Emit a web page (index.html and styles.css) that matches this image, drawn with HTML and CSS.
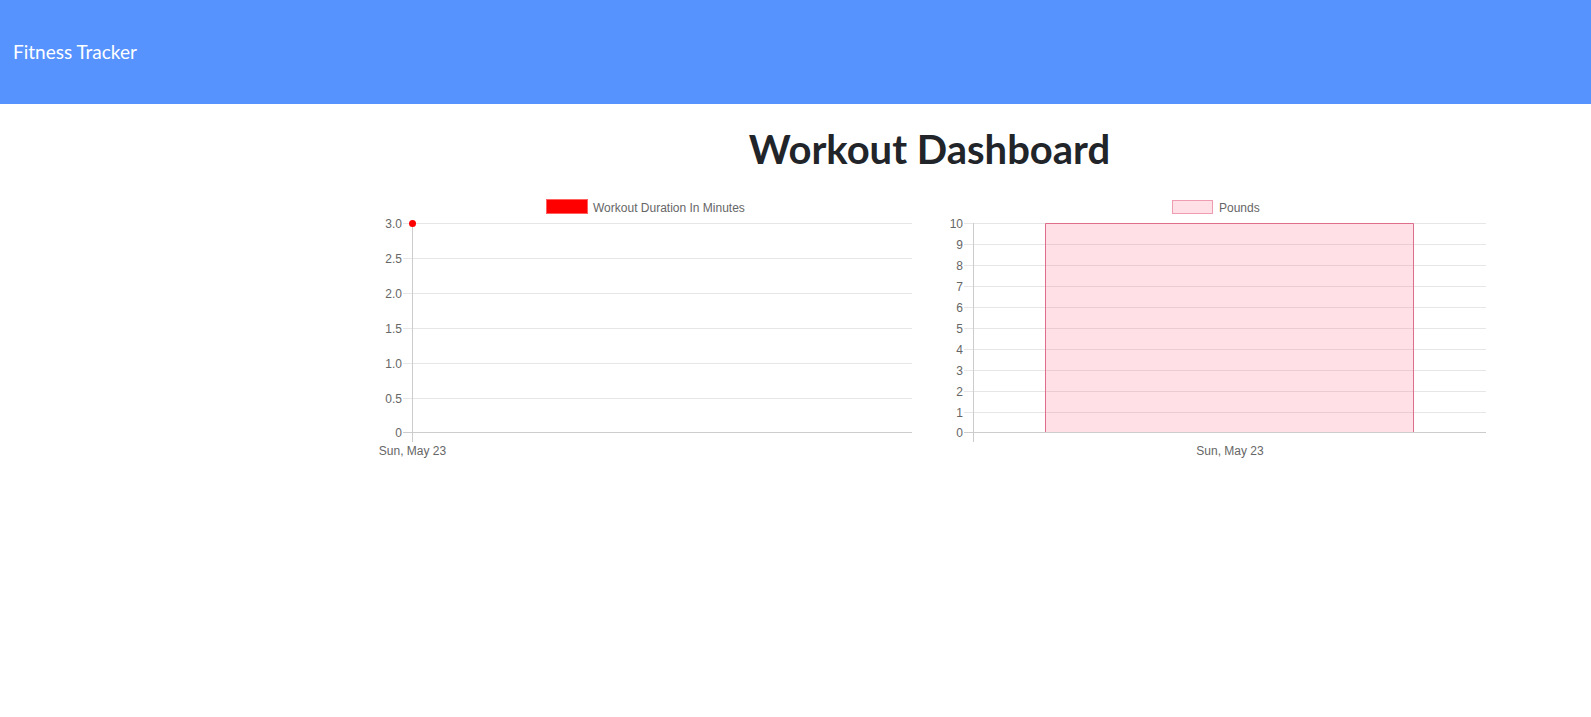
FILE: index.html
```html
<!DOCTYPE html>
<html lang="en">
<head>
<meta charset="utf-8">
<title>Fitness Tracker</title>
<link rel="stylesheet" href="styles.css">
</head>
<body>
<nav class="navbar">
  <span class="brand">Fitness Tracker</span>
</nav>
<main class="dashboard">
  <h1 class="title">Workout Dashboard</h1>
  <div class="charts">
    <div class="chart">
      <svg width="556" height="275" viewBox="0 0 556 275" class="chart-svg">
        <rect x="173.5" y="10.5" width="41" height="14" fill="#ff0000" stroke="#ff6060"/>
        <text x="220" y="23" class="lbl">Workout Duration In Minutes</text>
        <g stroke="#e6e6e6" stroke-width="1">
          <line x1="30" y1="34.5" x2="539" y2="34.5"/>
          <line x1="30" y1="69.5" x2="539" y2="69.5"/>
          <line x1="30" y1="104.5" x2="539" y2="104.5"/>
          <line x1="30" y1="139.5" x2="539" y2="139.5"/>
          <line x1="30" y1="174.5" x2="539" y2="174.5"/>
          <line x1="30" y1="209.5" x2="539" y2="209.5"/>
        </g>
        <line x1="30" y1="243.5" x2="539" y2="243.5" stroke="#cccccc"/>
        <line x1="39.5" y1="34" x2="39.5" y2="253" stroke="#cccccc"/>
        <g class="lbl" text-anchor="end">
          <text x="29" y="38.5">3.0</text>
          <text x="29" y="73.5">2.5</text>
          <text x="29" y="108.5">2.0</text>
          <text x="29" y="143.5">1.5</text>
          <text x="29" y="178.5">1.0</text>
          <text x="29" y="213.5">0.5</text>
          <text x="29" y="247.5">0</text>
        </g>
        <text x="39.5" y="266" class="lbl" text-anchor="middle">Sun, May 23</text>
        <circle cx="39.5" cy="34.5" r="3.5" fill="#ff0000"/>
      </svg>
    </div>
    <div class="chart">
      <svg width="557" height="275" viewBox="0 0 557 275" class="chart-svg">
        <rect x="243.5" y="11.5" width="40" height="13" fill="#ffe0e6" stroke="#ee9db0"/>
        <text x="290" y="23" class="lbl">Pounds</text>
        <g stroke="#e6e6e6" stroke-width="1">
          <line x1="35" y1="34.5" x2="557" y2="34.5"/>
          <line x1="35" y1="55.5" x2="557" y2="55.5"/>
          <line x1="35" y1="76.5" x2="557" y2="76.5"/>
          <line x1="35" y1="97.5" x2="557" y2="97.5"/>
          <line x1="35" y1="118.5" x2="557" y2="118.5"/>
          <line x1="35" y1="139.5" x2="557" y2="139.5"/>
          <line x1="35" y1="160.5" x2="557" y2="160.5"/>
          <line x1="35" y1="181.5" x2="557" y2="181.5"/>
          <line x1="35" y1="202.5" x2="557" y2="202.5"/>
          <line x1="35" y1="223.5" x2="557" y2="223.5"/>
        </g>
        <rect x="116" y="34.5" width="369" height="209" fill="rgba(255,99,132,0.2)" stroke="none"/>
        <path d="M116.5 243.5 V34.5 H484.5 V243.5" fill="none" stroke="#dd6f8c"/>
        <line x1="35" y1="243.5" x2="557" y2="243.5" stroke="#cccccc"/>
        <line x1="44.5" y1="34" x2="44.5" y2="253" stroke="#cccccc"/>
        <g class="lbl" text-anchor="end">
          <text x="34" y="38.5">10</text>
          <text x="34" y="59.5">9</text>
          <text x="34" y="80.5">8</text>
          <text x="34" y="101.5">7</text>
          <text x="34" y="122.5">6</text>
          <text x="34" y="143.5">5</text>
          <text x="34" y="164.5">4</text>
          <text x="34" y="185.5">3</text>
          <text x="34" y="206.5">2</text>
          <text x="34" y="227.5">1</text>
          <text x="34" y="247.5">0</text>
        </g>
        <text x="301" y="266" class="lbl" text-anchor="middle">Sun, May 23</text>
      </svg>
    </div>
  </div>
</main>
</body>
</html>
```

FILE: styles.css
```css
* { box-sizing: border-box; }
html, body {
  margin: 0;
  padding: 0;
  background: #ffffff;
  font-family: Lato, "Noto Sans", "Liberation Sans", sans-serif;
  color: #212529;
}
.navbar {
  height: 104px;
  background: #5793fe;
  display: flex;
  align-items: center;
  padding: 0 13px;
}
.brand {
  color: #ffffff;
  font-size: 19px;
  line-height: 1;
  padding-bottom: 1px;
}
.dashboard {
  width: 1113px;
  margin-left: 373px;
}
.title {
  margin: 0;
  padding-top: 21px;
  font-size: 40px;
  font-weight: 700;
  line-height: 48px;
  text-align: center;
  color: #212529;
}
.charts {
  display: flex;
  margin-top: 16px;
}
.chart {
  flex: 0 0 auto;
}
.chart-svg {
  display: block;
}
.lbl {
  font-family: "Liberation Sans", Arial, sans-serif;
  font-size: 12px;
  fill: #666666;
}
```
